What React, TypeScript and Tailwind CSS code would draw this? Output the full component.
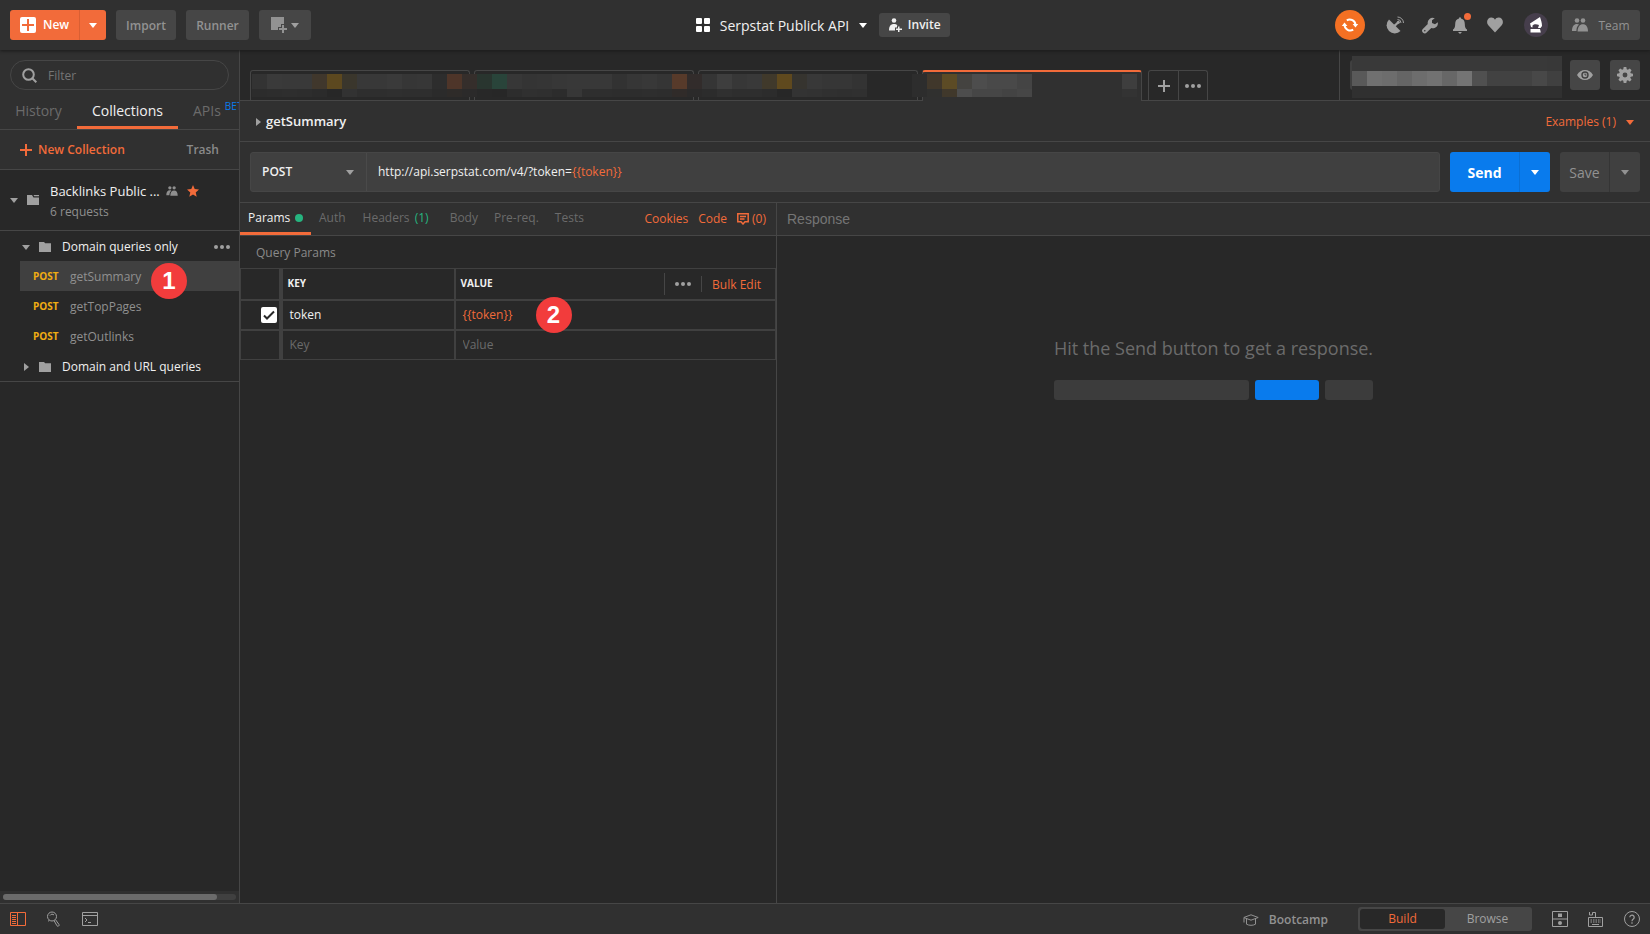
import React from "react";

const Caret = ({ className = "text-[#a0a0a0]" }: { className?: string }) => (
  <svg width="8" height="5" viewBox="0 0 8 5" className={"shrink-0 " + className} aria-hidden="true">
    <path d="M0 0h8L4 5z" fill="currentColor" />
  </svg>
);

const CaretRight = () => (
  <svg width="5" height="8" viewBox="0 0 5 8" className="shrink-0 text-[#a0a0a0]" aria-hidden="true">
    <path d="M0 0v8l5-4z" fill="currentColor" />
  </svg>
);

const Dots = () => (
  <svg width="16" height="4" viewBox="0 0 16 4" fill="currentColor" aria-hidden="true">
    <circle cx="2" cy="2" r="2" />
    <circle cx="8" cy="2" r="2" />
    <circle cx="14" cy="2" r="2" />
  </svg>
);

const Plus = ({ size = 12 }: { size?: number }) => (
  <svg width={size} height={size} viewBox="0 0 12 12" className="shrink-0" aria-hidden="true">
    <path d="M5 0h2v5h5v2H7v5H5V7H0V5h5z" fill="currentColor" />
  </svg>
);

const People = ({ className }: { className: string }) => (
  <svg viewBox="0 0 16 14" className={className} fill="currentColor" aria-hidden="true">
    <circle cx="5" cy="2.5" r="2.3" />
    <circle cx="11" cy="2.5" r="2.3" />
    <path d="M0 13C0 8.500 2 6 5 6c.8 0 1.500.2 2 .6C5 8.500 4.500 10 4.400 13zM5.600 13.500C5.800 9 7.600 6.300 10.900 6.300S16 9 16 13.500z" />
  </svg>
);

const Folder = ({ notched = false }: { notched?: boolean }) => (
  <svg width="12" height="10" viewBox="0 0 12 10" className="shrink-0 text-[#a0a0a0]" fill="currentColor" aria-hidden="true">
    {notched ? <path d="M0 0h5l1.500 2.500H12V10H0zM6.500 0H12v1.300H7.200z" /> : <path d="M0 0h5l1.200 1.200H12V10H0z" />}
  </svg>
);

const Mosaic = ({ rows, heights, width }: { rows: string[]; heights: number[]; width: number }) => {
  let y = 0;
  return (
    <svg width={width} height={heights.reduce((a, b) => a + b, 0)} shapeRendering="crispEdges" aria-hidden="true">
      {rows.map((row, r) => {
        const top = y;
        y += heights[r];
        return row.split(" ").map((c, i) => (c === "-" ? null : <rect key={r + "-" + i} x={i * 15} y={top} width="15" height={heights[r]} fill={"#" + c} />));
      })}
    </svg>
  );
};

const tabRows = [
  "333333 3a3a3a 393939 393939 40372c 5c481f 3a362c 383838 383838 3a3a3a 363636 373737 2d2d2d 4e3529 352e2b 29352f 29443a 373737 343434 353535 373737 383838 383838 383838 323232 363636 383838 353535 573a2a 322c2b 353535 3e3e3e 373737 393939 40392b 5f491e 36342f 383838 363636 363636 333333 - - - 2d2d2d 40372b 5c4b25 444340 4d4d4d 494949 494949 444444 - - - - - - 3e3e3e",
  "2c2c2c 2d2d2d 2e2e2e 2d2d2d 2b2b2b 272727 323232 2e2e2e 2e2e2e 2f2f2f 2e2e2e 2e2e2e 2b2b2b 2e2b29 2b2a2a 282828 272727 2d2d2d 303030 2f2f2f 2c2c2c 373737 2e2e2e 2e2e2e 2d2d2d 2d2d2d 2e2e2e 2d2d2d 302b29 2b2a2a 2c2c2c 303030 2e2e2e 2e2e2e 2c2c2c 272727 333333 323232 303030 2f2f2f 303030 - - - 2d2d2d 30302f 40382b 4d4d4d 464646 464646 434343 464646 - - - - - - 333333",
];

const envRows = [
  "393939 393939 393939 393939 393939 393939 393939 393939 393939 393939 393939 393939 393939 383838",
  "595959 707070 6d6d6d 656565 6d6d6d 727272 676767 747474 505050 424242 424242 424242 484848 404040",
  "303030 303030 303030 303030 303030 303030 303030 303030 303030 303030 303030 303030 303030 303030",
];

const Badge = ({ children }: { children: React.ReactNode }) => (
  <span className="flex size-9 items-center justify-center rounded-full bg-[#f23c3c] font-['Liberation_Sans',sans-serif] text-2xl font-bold text-white">
    {children}
  </span>
);

const greyButton = "flex h-[30px] items-center justify-center rounded-[3px] bg-[#464646] text-[#929292]";

function Header() {
  return (
    <header className="relative z-10 flex h-[50px] shrink-0 items-center justify-between bg-[#303030] px-2.5 shadow-[0_1px_3px_#1a1a1a]">
      <div className="flex flex-1 gap-2.5">
        <div className="flex h-[30px] rounded-[3px] bg-[#f26b3a] text-white">
          <button className="flex w-[69px] items-center gap-[7px] pl-2.5 font-semibold">
            <svg width="16" height="16" viewBox="0 0 16 16" aria-hidden="true">
              <rect width="16" height="16" rx="2" fill="#fff" />
              <path d="M7 2h2v5h5v2H9v5H7V9H2V7h5z" fill="#f26b3a" />
            </svg>
            New
          </button>
          <button aria-label="New options" className="flex w-[27px] items-center justify-center border-l border-[#d95f33]">
            <Caret className="text-white" />
          </button>
        </div>
        <button className={greyButton + " w-[60px] pt-0.5 font-semibold"}>Import</button>
        <button className={greyButton + " w-[63px] pt-0.5 font-semibold"}>Runner</button>
        <button aria-label="New window" className={greyButton + " w-[52px] gap-1"}>
          <svg width="16" height="16" viewBox="0 0 16 16" fill="currentColor" aria-hidden="true">
            <path d="M0 0h13v7h-3v3H7v3H0zM11 8h2v3h3v2h-3v3h-2v-3H8v-2h3z" />
          </svg>
          <Caret />
        </button>
      </div>
      <div className="mr-1 flex items-center">
        <button className="flex items-center gap-2.5 text-sm text-[#f0f0f0]">
          <svg width="14" height="14" viewBox="0 0 14 14" fill="#fff" aria-hidden="true">
            <rect width="6" height="6" rx="1" />
            <rect x="8" width="6" height="6" rx="1" />
            <rect y="8" width="6" height="6" rx="1" />
            <rect x="8" y="8" width="6" height="6" rx="1" />
          </svg>
          <span className="pt-0.5 font-medium">Serpstat Publick API</span>
          <Caret className="text-white" />
        </button>
        <button className="ml-3 flex h-6 w-[71px] items-center justify-center gap-1.5 rounded-[3px] bg-[#464646] text-xs font-semibold text-[#f0f0f0]">
          <svg width="13" height="14" viewBox="0 0 13 14" fill="currentColor" aria-hidden="true">
            <circle cx="5" cy="2.500" r="2.300" />
            <path d="M0 12.500C0 8 1.800 6 5 6c1.700 0 2.800.5 3.600 1.500H8v2H6v3zM9 8.500h1.500V10.500h2.500V12h-2.500v2H9v-2H7v-1.500h2z" />
          </svg>
          Invite
        </button>
      </div>
      <div className="flex flex-1 items-center justify-end text-[#a0a0a0]">
        <button aria-label="Sync" className="flex size-[30px] items-center justify-center rounded-full bg-[#f47023] text-white">
          <svg width="18" height="16" viewBox="0 0 18 16" fill="none" stroke="currentColor" strokeWidth="2" aria-hidden="true">
            <path d="M5.800 3.300A5.800 5.800 0 0 1 14.500 8M12.200 12.700A5.800 5.800 0 0 1 3.500 8" />
            <path d="M.8 9h5.600L3.500 5.500zM11.600 7h5.600l-2.700 3.500z" fill="currentColor" stroke="none" />
          </svg>
        </button>
        <button aria-label="Capture requests" className="ml-[21px]">
          <svg width="18" height="18" viewBox="0 0 18 18" fill="currentColor" aria-hidden="true">
            <path d="M3 3.500L14.500 15A8 8 0 0 1 3 3.500z" />
            <path d="M7.500 9L12 5.500l1.300 1.200L9 11z" />
            <circle cx="12.300" cy="6.200" r="1.500" />
            <path d="M11.500 3.500a3.500 3.500 0 0 1 3.500 3.500M11.500 1a6 6 0 0 1 6 6" fill="none" stroke="currentColor" />
          </svg>
        </button>
        <button aria-label="Settings" className="ml-[18px]">
          <svg width="17" height="17" viewBox="0 0 17 17" fill="currentColor" aria-hidden="true">
            <path d="M12.800 1.300A5 5 0 0 0 5.800 7L.8 12a2.600 2.600 0 0 0 3.900 3.500L9.300 11a5 5 0 0 0 6.500-5.700L13 7.300 10 6V3.300z" />
            <circle cx="2.800" cy="13.800" r=".8" fill="#303030" />
          </svg>
        </button>
        <button aria-label="Notifications" className="relative ml-3.5">
          <svg width="14" height="17" viewBox="0 0 14 17" fill="currentColor" aria-hidden="true">
            <path d="M6 1.500V.5h2v1c2.500.5 3.800 2.500 3.800 5.500 0 3 .7 4.500 2.200 5.500V14H0v-1.500C1.500 11.500 2.200 10 2.200 7c0-3 1.300-5 3.800-5.500zM5 15h4l-2 2z" />
          </svg>
          <span className="absolute -top-1 -right-1 size-[7px] rounded-full bg-[#f26b3a]" />
        </button>
        <button aria-label="Favourites" className="ml-5">
          <svg width="16" height="16" viewBox="0 0 16 16" fill="currentColor" aria-hidden="true">
            <path d="M8 15.500L1.300 8.300C-1.500 4.500 1 .5 4.300.5 6 .5 7.300 1.300 8 2.800 8.700 1.300 10 .5 11.700.5c3.300 0 5.800 4 3 7.800z" />
          </svg>
        </button>
        <button aria-label="Account" className="ml-[21px] flex size-6 items-center justify-center rounded-full bg-[#463e4c]">
          <svg width="13" height="16" viewBox="0 0 13 16" fill="#fff" aria-hidden="true">
            <path d="M0 6.500L10 0c1 3 2 6 2 9l-1.500 2H8l1-3C6.500 7 4 7 2.500 8.500v2L1 10zM.5 12h9.500l.8 3.500H.5z" />
          </svg>
        </button>
        <button className={greyButton + " ml-3.5 w-[78px] gap-2.5"}>
          <People className="h-3.5 w-4" />
          <span className="pt-0.5">Team</span>
        </button>
      </div>
    </header>
  );
}

function Sidebar() {
  const request = "ml-5 flex h-[30px] items-center pt-0.5 pl-[13px]";
  const method = "w-[37px] text-[10px] font-bold text-[#f0ad13]";
  return (
    <aside className="flex w-60 shrink-0 flex-col border-r border-[#464646]">
      <div className="bg-[#303030]">
        <div className="px-2.5 pt-2.5">
          <label className="flex h-[30px] items-center gap-[11px] rounded-full border border-[#464646] px-[11px]">
            <svg width="15" height="15" viewBox="0 0 15 15" className="shrink-0" fill="none" stroke="#a0a0a0" strokeWidth="2" aria-hidden="true">
              <circle cx="6.500" cy="6.500" r="5.300" />
              <path d="M10.300 10.300l4 4" />
            </svg>
            <input aria-label="Filter" placeholder="Filter" className="w-full bg-transparent pt-0.5 text-xs outline-none placeholder:text-[#757575]" />
          </label>
        </div>
        <nav className="flex h-10 overflow-hidden border-b border-[#464646] text-sm text-[#6b6b6b]">
          <button className="w-[77px] shrink-0 pt-0.5">History</button>
          <button className="w-[101px] shrink-0 border-b-[3px] border-[#f26b3a] pt-[5px] font-medium text-[#f0f0f0]">Collections</button>
          <button className="flex shrink-0 items-center pt-0.5 pl-[15px]">
            APIs<span className="mb-2 ml-1 text-[10px] text-[#097bed]">BETA</span>
          </button>
        </nav>
        <div className="flex h-10 items-center justify-between border-b border-[#464646] pr-5 pl-5">
          <button className="flex items-center gap-1.5 font-semibold text-[#f26b3a]">
            <Plus />
            New Collection
          </button>
          <button className="font-semibold text-[#8a8a8a]">Trash</button>
        </div>
      </div>
      <div className="flex h-[61px] items-center border-b border-[#464646] pl-2.5">
        <Caret />
        <span className="ml-[9px]">
          <Folder notched />
        </span>
        <div className="ml-[11px] pt-[3px]">
          <div className="flex items-center text-[13px] leading-5 font-medium text-[#f0f0f0]">
            Backlinks Public ...
            <People className="ml-1.5 h-2.5 w-3 text-[#8f8f8f]" />
            <svg width="12" height="12" viewBox="0 0 12 12" className="ml-[9px]" aria-hidden="true">
              <path d="M6 0l1.700 4.100 4.300.4-3.300 2.900 1 4.300L6 9.400l-3.700 2.300 1-4.300L0 4.500l4.300-.4z" fill="#f26b3a" />
            </svg>
          </div>
          <div className="leading-[21px] text-[#8f8f8f]">6 requests</div>
        </div>
      </div>
      <div className="border-b border-[#464646] text-[#909090]">
        <div className="flex h-[30px] items-center pt-0.5 pr-[9px] pl-[22px] font-medium text-[#f0f0f0]">
          <Caret />
          <span className="mr-[11px] ml-[9px]">
            <Folder />
          </span>
          <span>Domain queries only</span>
          <button aria-label="Folder options" className="ml-auto text-[#a0a0a0]">
            <Dots />
          </button>
        </div>
        <a href="#summary" className={request + " relative bg-[#404040]"}>
          <span className={method}>POST</span>
          <span>getSummary</span>
          <span className="absolute top-0.5 left-[131px]">
            <Badge>1</Badge>
          </span>
        </a>
        <a href="#pages" className={request}>
          <span className={method}>POST</span>
          <span>getTopPages</span>
        </a>
        <a href="#outlinks" className={request}>
          <span className={method}>POST</span>
          <span>getOutlinks</span>
        </a>
        <div className="flex h-[30px] items-center pt-0.5 pl-6 font-medium text-[#f0f0f0]">
          <CaretRight />
          <span className="mr-[11px] ml-2.5">
            <Folder />
          </span>
          <span>Domain and URL queries</span>
        </div>
      </div>
      <div className="mt-auto bg-[#303030] px-[3px] py-[3px]">
        <div className="h-1.5 rounded-full bg-[#404040]">
          <div className="h-full w-[92%] rounded-full bg-[#6b6b6b]" />
        </div>
      </div>
    </aside>
  );
}

function TabStrip() {
  const tab = "h-[30px] w-[220px] rounded-t-[3px] border border-b-0 border-[#464646]";
  return (
    <div className="flex h-[51px] shrink-0 justify-between">
      <div className="relative flex flex-1 items-end gap-1 border-b border-[#464646] pl-2.5">
        <div className={tab} />
        <div className={tab} />
        <div className={tab} />
        <div className="-mb-px h-[31px] w-[220px] rounded-t-[3px] border border-t-2 border-b-0 border-[#464646] border-t-[#f26b3a] bg-[#303030]" />
        <div className="absolute top-6 left-3">
          <Mosaic rows={tabRows} heights={[15, 8]} width={885} />
        </div>
        <div className="ml-0.5 flex h-[30px] w-[60px] rounded-t-[3px] border border-b-0 border-[#464646] text-[#a0a0a0]">
          <button aria-label="New tab" className="flex w-[30px] items-center justify-center border-r border-[#464646]">
            <Plus />
          </button>
          <button aria-label="Tab options" className="flex flex-1 items-center justify-center">
            <Dots />
          </button>
        </div>
      </div>
      <div className="flex w-[311px] items-start gap-2.5 border-b border-l border-[#464646] pt-2.5 pr-2.5 pl-2.5">
        <div className="relative h-[30px] flex-1 rounded-[3px] bg-[#404040]">
          <div className="absolute -top-1 left-0.5">
            <Mosaic rows={envRows} heights={[15, 15, 12]} width={210} />
          </div>
        </div>
        <button aria-label="Environment quick look" className={greyButton + " w-[30px]"}>
          <svg width="16" height="10" viewBox="0 0 16 10" aria-hidden="true">
            <path d="M0 5C2 1.700 4.700 0 8 0s6 1.700 8 5c-2 3.300-4.700 5-8 5S2 8.300 0 5z" fill="#a0a0a0" />
            <circle cx="8" cy="5" r="3" fill="none" stroke="#404040" strokeWidth="1.400" />
            <path d="M8 3.500V5h1.500" stroke="#404040" fill="none" />
          </svg>
        </button>
        <button aria-label="Manage environments" className={greyButton + " w-[30px]"}>
          <svg width="16" height="16" viewBox="-8 -8 16 16" fill="#a0a0a0" aria-hidden="true">
            {[0, 45, 90, 135, 180, 225, 270, 315].map((a) => (
              <path key={a} d="M-2-4.500L-1.300-8h2.600L2-4.500z" transform={"rotate(" + a + ")"} />
            ))}
            <circle r="4.200" fill="none" stroke="#a0a0a0" strokeWidth="3.500" />
          </svg>
        </button>
      </div>
    </div>
  );
}

function RequestBar() {
  return (
    <div className="shrink-0 bg-[#303030]">
      <div className="flex h-[41px] items-center justify-between border-b border-[#464646] pt-0.5 pr-4 pl-4">
        <h1 className="flex items-center gap-[5px] text-[13px] font-semibold text-[#f0f0f0]">
          <CaretRight />
          getSummary
        </h1>
        <button className="flex items-center gap-2.5 text-[#f26b3a]">
          Examples (1)
          <Caret className="text-[#f26b3a]" />
        </button>
      </div>
      <div className="flex h-[61px] items-center gap-2.5 border-b border-[#464646] px-2.5">
        <div className="flex h-10 flex-1 rounded-[3px] border border-[#464646] bg-[#404040]">
          <div className="relative flex w-[116px] items-center border-r border-[#4a4a4a]">
            <select aria-label="Request method" className="h-full w-full appearance-none bg-transparent pl-[11px] font-semibold text-[#f0f0f0] outline-none">
              <option>POST</option>
            </select>
            <span className="pointer-events-none absolute right-3">
              <Caret />
            </span>
          </div>
          <div role="textbox" aria-label="Request URL" tabIndex={0} className="flex flex-1 items-center pl-[11px] font-medium text-[#f0f0f0]">
            http://api.serpstat.com/v4/?token=<span className="text-[#f26b3a]">{"{{token}}"}</span>
          </div>
        </div>
        <div className="flex h-10 rounded-[3px] bg-[#097bed] text-white">
          <button className="w-[69px] pt-0.5 text-sm font-bold">Send</button>
          <button aria-label="Send options" className="flex w-[31px] items-center justify-center border-l border-[#0a6fd4]">
            <Caret className="text-white" />
          </button>
        </div>
        <div className="flex h-10 rounded-[3px] bg-[#404040] text-[#929292]">
          <button className="w-[49px] pt-0.5 text-sm font-medium">Save</button>
          <button aria-label="Save options" className="flex w-[31px] items-center justify-center border-l border-[#353535]">
            <Caret className="text-[#929292]" />
          </button>
        </div>
      </div>
    </div>
  );
}

function Params() {
  const cell = "border-2 border-[#404040] p-0 text-left";
  return (
    <section className="flex w-[537px] shrink-0 flex-col border-r border-[#464646]">
      <div className="flex h-[33px] items-center border-b border-[#464646] bg-[#303030] text-[#6b6b6b]">
        <div className="flex h-full items-center pb-0.5">
          <button className="-mb-0.5 flex h-8 w-[71px] items-center gap-[5px] self-start border-b-[3px] border-[#f26b3a] pl-2 font-medium text-[#f0f0f0]">
            Params <span className="size-2 rounded-full bg-[#26b47f]" />
          </button>
          <button className="ml-2">Auth</button>
          <button className="ml-[17px]">
            Headers <span className="ml-0.5 text-[#26b47f]">(1)</span>
          </button>
          <button className="ml-[21px]">Body</button>
          <button className="ml-4">Pre-req.</button>
          <button className="ml-4">Tests</button>
        </div>
        <div className="mr-2.5 ml-auto flex items-center gap-2.5 text-[#f26b3a]">
          <a href="#cookies">Cookies</a>
          <a href="#code">Code</a>
          <button className="flex items-center gap-[3px]">
            <svg width="12" height="12" viewBox="0 0 12 12" fill="none" stroke="currentColor" strokeWidth="1.500" aria-hidden="true">
              <path d="M.8.8h10.400v8H8L6 11 4 8.800H.8zM3 3.500h6M3 6h4.500" />
            </svg>
            (0)
          </button>
        </div>
      </div>
      <h2 className="flex h-8 items-center pt-0.5 pl-4 font-medium text-[#8a8a8a]">Query Params</h2>
      <table className="w-full table-fixed border-collapse">
        <colgroup>
          <col className="w-10" />
          <col className="w-[174px]" />
          <col />
        </colgroup>
        <thead>
          <tr className="h-[31px] text-[10px] font-bold text-[#f0f0f0]">
            <th aria-label="Enabled" className={cell + " border-t border-l border-r-4"} />
            <th className={cell + " border-t pl-[5px]"}>KEY</th>
            <th className={cell + " border-t border-r"}>
              <div className="flex items-center pr-3.5 pl-[5px]">
                VALUE
                <span className="ml-auto flex h-[22px] items-center border-l border-[#464646] pl-2.5 text-[#a0a0a0]">
                  <button aria-label="Column options">
                    <Dots />
                  </button>
                </span>
                <span className="ml-2.5 flex h-4 items-center border-l border-[#464646] pt-0.5 pl-2.5">
                  <button className="text-xs font-normal text-[#f26b3a]">Bulk Edit</button>
                </span>
              </div>
            </th>
          </tr>
        </thead>
        <tbody className="text-[#f0f0f0]">
          <tr className="h-[30px]">
            <td className={cell + " border-l border-r-4"}>
              <label className="flex justify-end pr-0.5">
                <input type="checkbox" defaultChecked aria-label="Enable token" className="peer sr-only" />
                <svg width="16" height="16" viewBox="0 0 16 16" aria-hidden="true">
                  <rect width="16" height="16" rx="2" fill="#fff" />
                  <path d="M3 8.500l3 3 7-7" fill="none" stroke="#282828" strokeWidth="2" />
                </svg>
              </label>
            </td>
            <td className={cell + " pl-[7px] font-medium"}>token</td>
            <td className={cell + " relative border-r pl-[7px] text-[#f26b3a]"}>
              {"{{token}}"}
              <span className="absolute -top-1 left-20">
                <Badge>2</Badge>
              </span>
            </td>
          </tr>
          <tr className="h-[30px]">
            <td className={cell + " border-b border-l border-r-4"} />
            <td className={cell + " border-b pl-[7px]"}>
              <input aria-label="Key" placeholder="Key" className="w-full bg-transparent outline-none placeholder:text-[#6b6b6b]" />
            </td>
            <td className={cell + " border-r border-b pl-[7px]"}>
              <input aria-label="Value" placeholder="Value" className="w-full bg-transparent outline-none placeholder:text-[#6b6b6b]" />
            </td>
          </tr>
        </tbody>
      </table>
    </section>
  );
}

function Response() {
  return (
    <section className="flex-1">
      <h2 className="flex h-[33px] items-center border-b border-[#464646] bg-[#303030] pl-2.5 font-['Liberation_Sans',sans-serif] text-sm text-[#757575]">Response</h2>
      <div className="flex flex-col items-center pt-[98px]">
        <div>
          <p className="text-lg text-[#6b6b6b]">Hit the Send button to get a response.</p>
          <div className="mt-[18px] flex h-5 gap-1.5">
            <span className="flex-1 rounded-[3px] bg-[#3c3c3c]" />
            <span className="w-16 rounded-[3px] bg-[#097bed]" />
            <span className="w-12 rounded-[3px] bg-[#3c3c3c]" />
          </div>
        </div>
      </div>
    </section>
  );
}

function StatusBar() {
  return (
    <footer className="flex h-[31px] shrink-0 items-center justify-between border-t border-[#464646] bg-[#303030] px-2.5 text-[#a0a0a0]">
      <div className="flex items-center">
        <button aria-label="Toggle sidebar" className="text-[#f26b3a]">
          <svg width="16" height="14" viewBox="0 0 16 14" fill="none" stroke="currentColor" aria-hidden="true">
            <path d="M.5.5h15v13H.5zM7.500.5v13M2 3.500h4M2 5.500h4M2 7.500h4M2 9.500h4M2 11.500h4" />
          </svg>
        </button>
        <button aria-label="Find and replace" className="ml-5">
          <svg width="14" height="16" viewBox="0 0 14 16" fill="none" stroke="currentColor" aria-hidden="true">
            <circle cx="6" cy="5.500" r="4.500" />
            <path d="M4 4.500A2.500 2.500 0 0 1 8 4M8 9.500l3 5.300a1.200 1.200 0 0 0 2-1.300L9.500 8.700M3.300 9.300l-1.300 1" />
          </svg>
        </button>
        <button aria-label="Console" className="ml-[22px]">
          <svg width="16" height="14" viewBox="0 0 16 14" fill="none" stroke="currentColor" aria-hidden="true">
            <path d="M.5.5h15v13H.5zM.5 3.500h15M3 6l2 2-2 2M6 10.500h3" />
          </svg>
        </button>
      </div>
      <div className="flex items-center">
        <button className="flex items-center gap-2.5 pt-0.5 font-semibold text-[#929292]">
          <svg width="16" height="12" viewBox="0 0 16 12" fill="none" stroke="currentColor" aria-hidden="true">
            <path d="M.8 3.500L8 .8l7.200 2.700L8 6.200zM3.500 5v5.200c2.500 1.500 6.500 1.500 9 0V5M1 4v4.500" />
          </svg>
          Bootcamp
        </button>
        <div className="ml-[30px] flex h-6 w-[174px] rounded-[3px] bg-[#464646] p-0.5">
          <button className="flex-1 rounded-[3px] bg-[#282828] text-[#f26b3a]">Build</button>
          <button className="flex-1">Browse</button>
        </div>
        <button aria-label="Two pane view" className="ml-5">
          <svg width="16" height="16" viewBox="0 0 16 16" fill="none" stroke="currentColor" aria-hidden="true">
            <path d="M.5.5h15v15H.5zM.5 8h15" />
            <path d="M6 2.500h4v3.500H6z" fill="currentColor" stroke="none" />
            <circle cx="8" cy="12" r="2" fill="currentColor" stroke="none" />
          </svg>
        </button>
        <button aria-label="Keyboard shortcuts" className="ml-5">
          <svg width="16" height="16" viewBox="0 0 16 16" fill="none" stroke="currentColor" aria-hidden="true">
            <path d="M.5 6.500h14v9H.5zM1.500 1v3h3V1.500h3v5" />
            <path d="M2.500 9h10.500M2.500 11h10.500" strokeDasharray="1.500 1" />
            <path d="M4 13.500h7" />
          </svg>
        </button>
        <button aria-label="Help" className="ml-5">
          <svg width="16" height="16" viewBox="0 0 16 16" fill="none" stroke="currentColor" aria-hidden="true">
            <circle cx="8" cy="8" r="7.500" />
            <path d="M5.800 6.300a2.200 2.200 0 1 1 3.500 1.800C8.400 8.700 8 9 8 10.200M8 11.300v1.400" strokeWidth="1.200" />
          </svg>
        </button>
      </div>
    </footer>
  );
}

export default function App() {
  return (
    <div className="flex h-screen flex-col bg-[#282828] font-['Open_Sans',sans-serif] text-xs text-[#f0f0f0]">
      <Header />
      <div className="flex min-h-0 flex-1">
        <Sidebar />
        <main className="flex min-w-0 flex-1 flex-col">
          <TabStrip />
          <RequestBar />
          <div className="flex min-h-0 flex-1">
            <Params />
            <Response />
          </div>
        </main>
      </div>
      <StatusBar />
    </div>
  );
}
